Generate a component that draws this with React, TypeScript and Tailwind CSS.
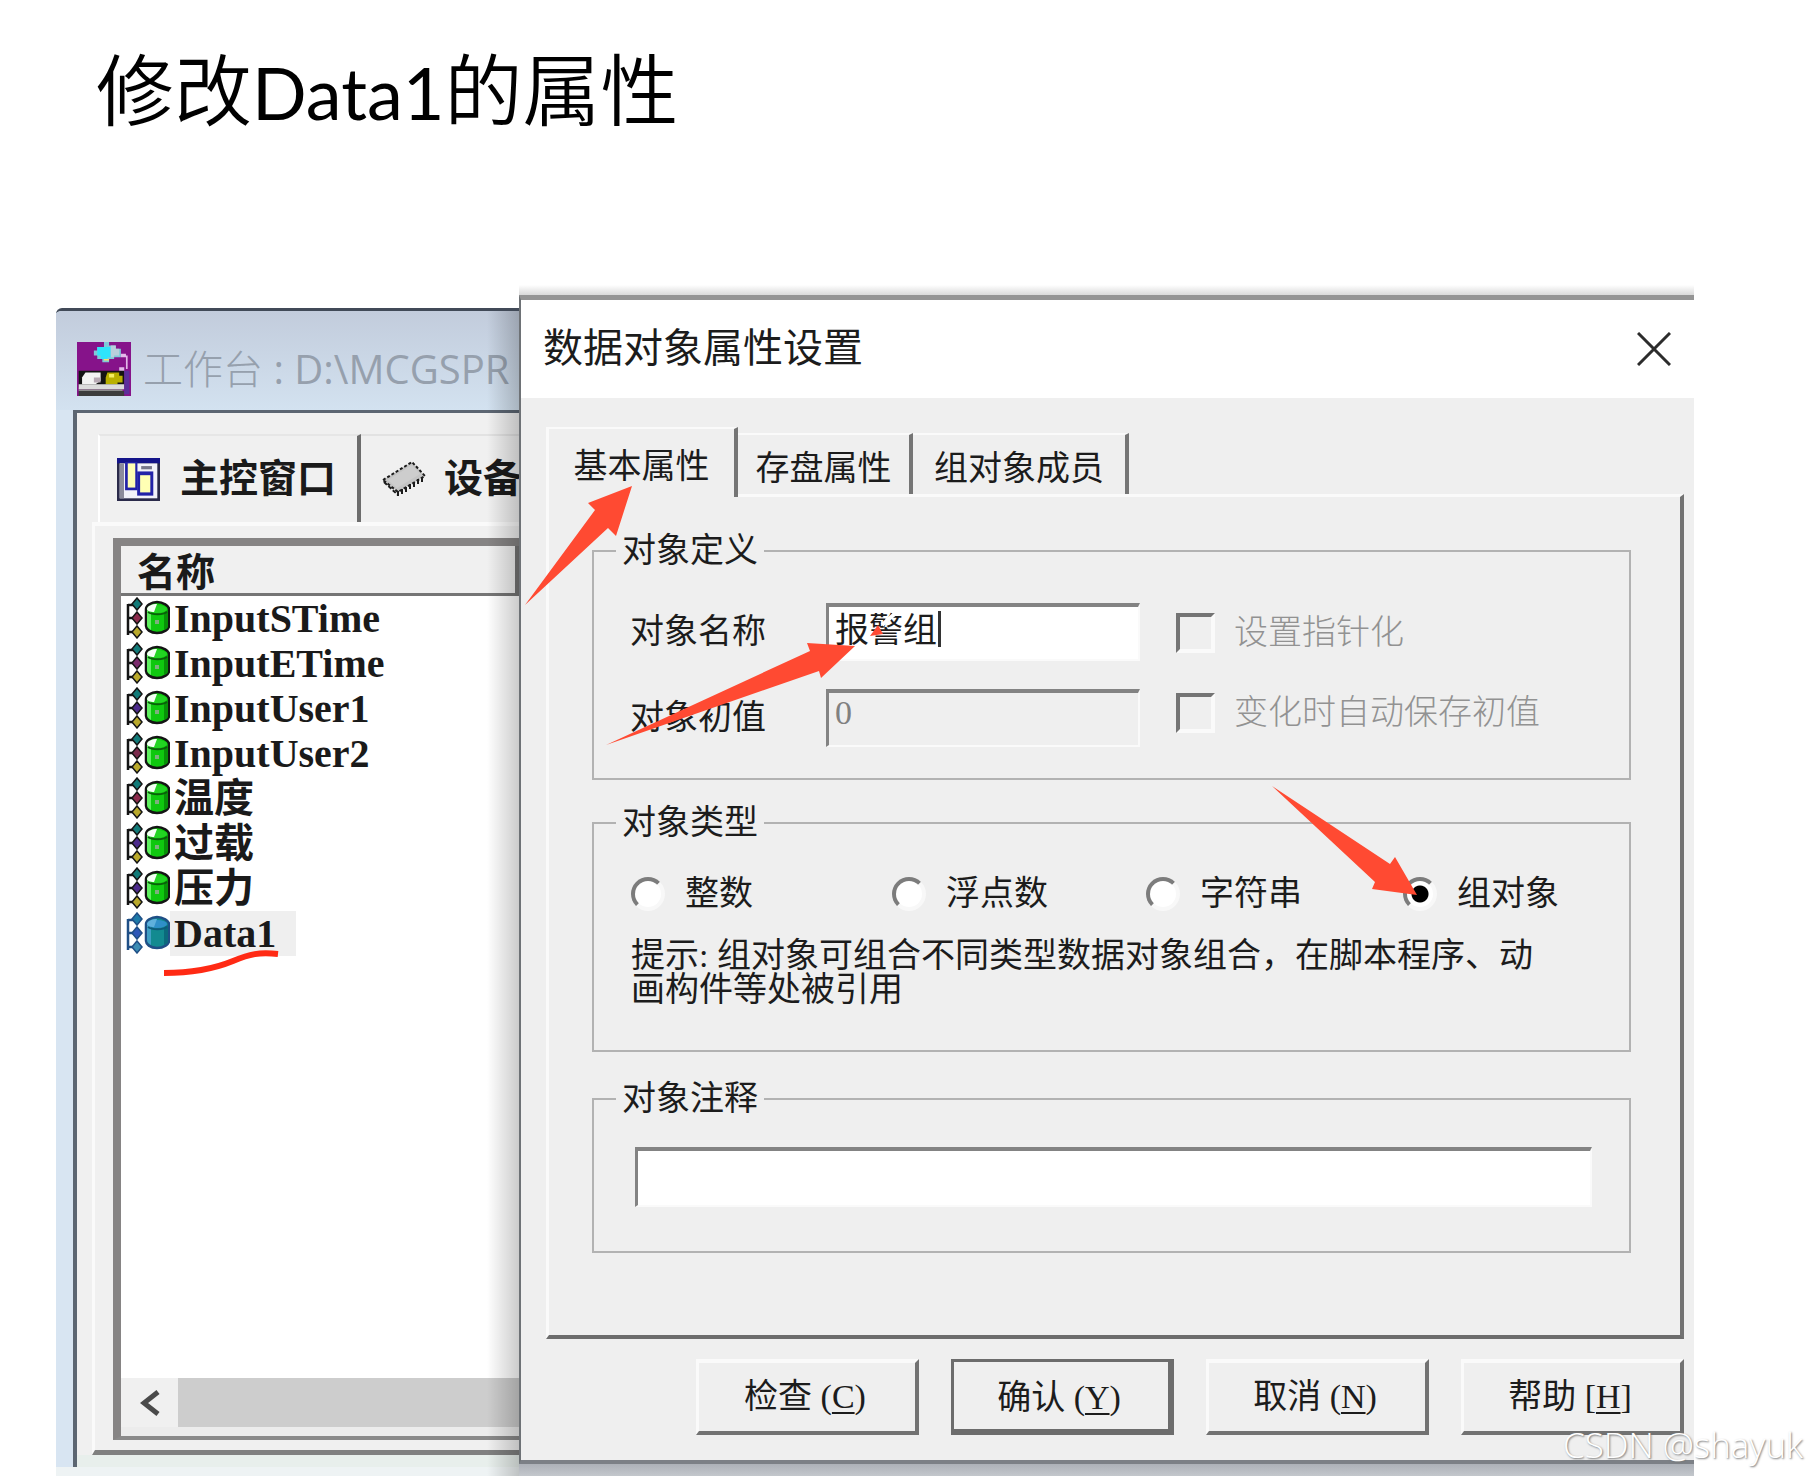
import React from "react";

const sans = "font-['Liberation_Serif','Noto_Sans_CJK_SC',sans-serif]";

function WorkbenchIcon() {
  return (
    <svg viewBox="0 0 32 32" className="h-[54px] w-[54px] shrink-0" aria-hidden="true">
      <rect width="32" height="32" fill="#86138a" />
      <path d="M16 0h3v2h4v2h3v5h-4v1h-3v2h-4v-2h-3V8h-2V5h2V3h4z" fill="#7fc9d8" />
      <path d="M12 3h8v6h-2v1h-4V8h-2z" fill="#2fe4fb" />
      <path d="M20 2h3v2h2v4h-3v1h-2z" fill="#b9cfdc" />
      <path d="M16 10h3v1h-3z" fill="#f4e06a" />
      <path d="M26 7h3v1h1v8h-1V9h-3zM25 15h3v3h-3z" fill="#e3b9ea" />
      <path d="M1 17h27v10H1z" fill="#141414" />
      <path d="M5 18h9v5l-3 2H3v-4z" fill="#f3f3f3" />
      <path d="M10 21h4v3h-4z" fill="#b7a9b4" />
      <path d="M18 18h7v2h2v4h-3v1h-7v-4z" fill="#b9b000" />
      <path d="M19 19h3v2h-3z" fill="#f4ef62" />
      <path d="M1 25h27v3H1z" fill="#dcdcdc" />
      <path d="M1 28h26v1H1z" fill="#8c8c8c" />
      <path d="M1 29h27v3H1z" fill="#3c3c3c" />
      <path d="M28 17h3v14h-3z" fill="#5c2f9b" />
    </svg>
  );
}

function LayoutIcon() {
  return (
    <svg viewBox="0 0 16 16" className="h-[43px] w-[43px] shrink-0" aria-hidden="true">
      <rect width="16" height="16" fill="#2a2a4a" />
      <rect width="16" height="2" fill="#14148a" />
      <rect x="1" y="2" width="14" height="13" fill="#f2f2fa" />
      <rect x="1" y="2" width="1.6" height="13" fill="#8c8c9c" />
      <rect x="3" y="1.500" width="4.600" height="10.500" fill="#2222a8" />
      <rect x="4" y="2" width="2.800" height="9" fill="#ffffb4" />
      <rect x="7.500" y="5" width="6" height="9" fill="#2222a8" />
      <rect x="8.600" y="6.400" width="3.800" height="6.400" fill="#ffffb4" />
      <rect x="9" y="3" width="4" height="1.200" fill="#77778c" />
    </svg>
  );
}

function ChipIcon() {
  return (
    <svg viewBox="0 0 45 38" className="h-[38px] w-[45px] shrink-0" aria-hidden="true">
      <path d="M2 20 31 2l13 14-27 16z" fill="#c4c4c4" stroke="#1c1c1c" strokeWidth="2" strokeDasharray="3 2" />
      <path d="M17 31v5M21 29v5M25 27v5M29 24v5M33 22v5M37 19v5M41 17v5" stroke="#1c1c1c" strokeWidth="2" />
      <path d="m3 22 14 13" stroke="#1c1c1c" strokeWidth="2" strokeDasharray="4 2" />
      <path d="M7 20 31 5l8 9-23 14z" fill="#cdcdcd" />
    </svg>
  );
}

function DataIcon({ selected, mid }: { selected?: boolean; mid: string }) {
  const line = selected ? "#1f4f86" : "#141414";
  return (
    <svg viewBox="0 0 45 42" className="h-[42px] w-[45px] shrink-0" aria-hidden="true">
      <path d="M3 7v31M3 8h8M3 21h7M3 35h7" stroke={line} strokeWidth="2.500" fill="none" />
      <path d="m12 1 5 6-5 6-5-6z" fill={selected ? "#1d7aa8" : "#127a78"} stroke={line} strokeWidth="1.500" />
      <path d="m12 15 5 6-5 6-5-6z" fill={selected ? "#2f58b8" : mid} stroke={line} strokeWidth="1.500" />
      <path d="m12 29 5 6-5 6-5-6z" fill={selected ? "#3c8cb4" : "#b9a92c"} stroke={line} strokeWidth="1.500" />
      <path
        d="M21 12c0-3 5-7 11-7s12 4 12 7v17c0 3-5 7-12 7s-11-4-11-7z"
        fill={selected ? "#128a90" : "#0fc80f"}
        stroke={line}
        strokeWidth="2.500"
      />
      <path d="M22 13v15c0 2 2 4 4 5V15z" fill={selected ? "#3f9fc4" : "#5ff05f"} />
      <path d="M39 15v18c3-1 4-2 4-4V13z" fill={selected ? "#0b6a7c" : "#089208"} />
      <ellipse cx="32" cy="12" rx="10" ry="4" fill={selected ? "#2f8fc8" : "#22d422"} />
      <path d="M22 12c0-3 5-5 10-5l-3 8c-4 0-7-1-7-3z" fill={selected ? "#5fb0dc" : "#f4fff4"} />
      <path d="M23 15c4 3 15 3 19 0" stroke={selected ? "#0f5a7a" : "#0a5f0a"} strokeWidth="2" fill="none" />
      {!selected && <path d="M30 23h4v4h-4z" fill="#7fae7f" />}
    </svg>
  );
}

const rows = [
  { name: "InputSTime", mid: "#8c2a4c" },
  { name: "InputETime", mid: "#7a2a6c" },
  { name: "InputUser1", mid: "#4c2a8c" },
  { name: "InputUser2", mid: "#7a2a4c" },
  { name: "温度", mid: "#8c2a4c" },
  { name: "过载", mid: "#4c2a8c" },
  { name: "压力", mid: "#4c2a8c" },
  { name: "Data1", mid: "#2f58b8", selected: true },
];

function Workbench() {
  return (
    <section className="relative mt-[23px] flex w-[463px] shrink-0 flex-col overflow-hidden rounded-tl-md border-t-3 border-[#414a58] bg-[#d8e5f2]">
      <header className="flex h-[99px] items-center gap-3 bg-linear-to-b from-[#c2ccdc] to-[#d3e2f0] pt-4 pl-[21px]">
        <WorkbenchIcon />
        <span className="font-['Open_Sans','Noto_Sans_CJK_SC',sans-serif] text-[40px] leading-[52px] whitespace-nowrap text-[#96a0ad]">
          <span className="font-light">工作台</span> : D:\MCGSPR
        </span>
      </header>
      <div className="ml-[17px] flex flex-1 flex-col border-t-3 border-l-4 border-[#5c6672] bg-[#f0f0f0] pt-[21px]">
        <div role="tablist" className="ml-[21px] flex h-[88px]">
          <button
            role="tab"
            className={`flex w-[263px] shrink-0 items-center gap-5 border-t-2 border-r-4 border-l-2 border-t-[#e6e6e6] border-r-[#6c6c6c] border-l-white pl-[17px] text-[39px] leading-[44px] font-bold ${sans}`}
          >
            <LayoutIcon />
            <span>主控窗口</span>
          </button>
          <button
            role="tab"
            className={`flex shrink-0 items-center gap-[18px] border-t-2 border-[#e2e2e2] pl-5 text-[39px] leading-[44px] font-bold ${sans}`}
          >
            <ChipIcon />
            <span>设备</span>
          </button>
        </div>
        <div className="ml-[15px] flex flex-1 flex-col border-t-4 border-b-5 border-l-3 border-t-[#fafafa] border-b-[#808080] border-l-[#fafafa] pt-3 pb-2.5 pl-[18px]">
          <div className="flex flex-1 flex-col border-t-8 border-b-4 border-l-8 border-[#868484] border-b-[#8a8a8a] bg-white">
            <table className="w-full border-collapse text-left">
              <thead>
                <tr>
                  <th
                    className={`h-12 border-r-4 border-b-3 border-[#757575] bg-[#f0f0f0] pt-1.5 pl-4 text-[39px] leading-[39px] font-bold ${sans}`}
                  >
                    名称
                  </th>
                </tr>
              </thead>
              <tbody>
                {rows.map((r) => (
                  <tr key={r.name}>
                    <td className="h-[45px] p-0 pl-1">
                      <div className="flex h-[45px] items-center">
                        <DataIcon selected={r.selected} mid={r.mid} />
                        <span
                          className={
                            r.selected
                              ? `bg-[#efefef] pr-5 pl-1 text-[40px] leading-[45px] font-bold text-[#1a1a1a] ${sans}`
                              : `pl-1 text-[40px] leading-[45px] font-bold text-[#1a1a1a] ${sans}`
                          }
                        >
                          {r.name}
                        </span>
                      </div>
                    </td>
                  </tr>
                ))}
              </tbody>
            </table>
            <svg viewBox="0 0 120 28" className="-mt-1.5 ml-10 h-7 w-[120px]" aria-hidden="true">
              <path d="M3 23C30 23 55 18 72 11S98 2 117 4" fill="none" stroke="#ff2a14" strokeWidth="6" />
            </svg>
            <div className="mt-auto flex h-[49px] bg-[#cdcdcd]">
              <button aria-label="向左滚动" className="flex w-[57px] items-center justify-center bg-[#f0f0f0]">
                <svg viewBox="0 0 20 26" className="h-[26px] w-5" aria-hidden="true">
                  <path d="M18 2 4 13l14 11" fill="none" stroke="#4a4a4a" strokeWidth="5" />
                </svg>
              </button>
            </div>
            <div className="h-[9px] bg-[#ececec]" />
          </div>
        </div>
        <div className="h-3 bg-[#e8efec]" />
      </div>
      <div className="h-[9px] bg-[#eef3f4]" />
      <div className="pointer-events-none absolute inset-y-0 right-0 w-8 bg-linear-to-r from-transparent to-black/20" />
    </section>
  );
}

const label = `text-[34px] leading-[34px] text-[#1c1c1c] ${sans}`;
const sunken =
  "border-t-4 border-r-2 border-b-2 border-l-3 border-t-[#838383] border-r-[#fafafa] border-b-[#fafafa] border-l-[#838383]";
const group = "block min-w-0 border-2 border-[#b2b2b2]";

function Check({ id, text }: { id: string; text: string }) {
  return (
    <div className="flex items-center gap-[19px]">
      <input
        id={id}
        type="checkbox"
        disabled
        className="h-10 w-[39px] shrink-0 appearance-none border-4 border-t-[#747474] border-r-[#fafafa] border-b-[#fafafa] border-l-[#747474] bg-[#efefef]"
      />
      <label htmlFor={id} className={`text-[34px] leading-[34px] font-light whitespace-nowrap text-[#929292] ${sans}`}>
        {text}
      </label>
    </div>
  );
}

function Radio({ id, text, checked }: { id: string; text: string; checked?: boolean }) {
  return (
    <div className="flex items-center gap-5">
      <input
        id={id}
        type="radio"
        name="kind"
        defaultChecked={checked}
        className="h-[34px] w-[34px] shrink-0 appearance-none rounded-full border-4 border-t-[#7c7c7c] border-r-[#f8f8f8] border-b-[#f8f8f8] border-l-[#7c7c7c] bg-white checked:bg-[radial-gradient(circle,#000_8px,#fff_9px)]"
      />
      <label htmlFor={id} className={`whitespace-nowrap ${label}`}>
        {text}
      </label>
    </div>
  );
}

function Action({ text, open, hotkey, close, primary }: { text: string; open: string; hotkey: string; close: string; primary?: boolean }) {
  return (
    <button
      className={
        primary
          ? `h-[76px] w-[223px] border-t-3 border-r-6 border-b-6 border-l-3 border-[#6c6c6c] pt-1 pr-1 ${label}`
          : `h-[76px] w-[223px] border-t-4 border-r-4 border-b-4 border-l-3 border-t-[#fafafa] border-r-[#727272] border-b-[#727272] border-l-[#fafafa] pr-1 ${label}`
      }
    >
      {text} {open}
      <span className="underline decoration-2 underline-offset-4">{hotkey}</span>
      {close}
    </button>
  );
}

function Annotations() {
  return (
    <svg viewBox="0 0 1175 1192" className="pointer-events-none absolute top-0 left-0 z-20 h-[1192px] w-[1175px]" aria-hidden="true">
      <g fill="#ff4a32">
        <path d="M6 320 76 225l-7-7 44-17-16 50-8-8z" />
        <path d="m87 460 204-94-3-8 48 3-34 32-2-7z" />
        <path d="m753 501 118 78 5-7 22 38-45-6 3-7z" />
        <path d="m351 351 8-11 5 9z" />
      </g>
      <path d="m379 326-16 14" stroke="#fff" strokeWidth="4" />
    </svg>
  );
}

function PropertiesDialog() {
  return (
    <section role="dialog" aria-label="数据对象属性设置" className="relative flex min-w-0 flex-1 flex-col">
      <div className="h-2.5 bg-linear-to-b from-white to-[#dadada]" />
      <div className="flex flex-col border-t-5 border-b-4 border-l-2 border-t-[#959595] border-b-[#7c8086] border-l-[#6e7276] bg-[#efefef]">
        <header className="flex h-[98px] items-center justify-between bg-white pr-[23px] pl-[22px]">
          <h2 className={`text-[40px] leading-[48px] text-[#1c1c1c] ${sans}`}>数据对象属性设置</h2>
          <button aria-label="关闭" className="h-[34px] w-[34px]">
            <svg viewBox="0 0 34 34" className="h-[34px] w-[34px]" aria-hidden="true">
              <path d="m1 1 32 32M33 1 1 33" stroke="#2c2c2c" strokeWidth="3" />
            </svg>
          </button>
        </header>

        <div className="pt-[29px] pr-2.5 pl-[25px]">
          <div role="tablist" className="flex h-[67px] items-end">
            <button
              role="tab"
              aria-selected="true"
              className={`relative z-10 -mb-[3px] h-[70px] w-48 border-t-2 border-r-4 border-l-3 border-t-[#fafafa] border-r-[#757575] border-l-[#fafafa] bg-[#efefef] pt-2 ${label}`}
            >
              基本属性
            </button>
            <button
              role="tab"
              aria-selected="false"
              className={`h-[61px] w-[175px] border-t-2 border-r-4 border-t-[#fafafa] border-r-[#757575] pt-2 ${label}`}
            >
              存盘属性
            </button>
            <button
              role="tab"
              aria-selected="false"
              className={`h-[61px] w-[216px] border-t-2 border-r-4 border-t-[#fafafa] border-r-[#757575] pt-2 ${label}`}
            >
              组对象成员
            </button>
          </div>

          <form className="flex flex-col border-t-3 border-r-4 border-b-4 border-l-3 border-t-[#fafafa] border-r-[#727272] border-b-[#6c6c6c] border-l-[#fafafa] pt-[37px] pr-[49px] pb-[82px] pl-[43px]">
            <fieldset className={group}>
              <legend className={`ml-[22px] px-1.5 ${label}`}>对象定义</legend>
              <div className="grid grid-cols-[196px_314px_1fr] gap-y-7 pt-[35px] pb-[31px] pl-9">
                <label htmlFor="name" className={`self-center ${label}`}>
                  对象名称
                </label>
                <div className="relative">
                  <input
                    id="name"
                    type="text"
                    defaultValue="报警组"
                    className={`h-[58px] w-full bg-white pb-3 pl-1.5 outline-none ${sunken} ${label}`}
                  />
                  <span className="absolute top-2 left-[112px] h-9 w-[3px] bg-[#333]" />
                </div>
                <div className="pt-2.5 pl-9">
                  <Check id="pointer" text="设置指针化" />
                </div>
                <label htmlFor="initial" className={`self-center ${label}`}>
                  对象初值
                </label>
                <input
                  id="initial"
                  type="text"
                  disabled
                  defaultValue="0"
                  className={`h-[58px] w-full bg-[#efefef] pb-3 pl-1.5 text-[34px] leading-[34px] text-[#808080] ${sans} ${sunken}`}
                />
                <div className="pt-1 pl-9">
                  <Check id="autosave" text="变化时自动保存初值" />
                </div>
              </div>
            </fieldset>

            <fieldset className={`mt-[26px] ${group}`}>
              <legend className={`ml-[22px] px-1.5 ${label}`}>对象类型</legend>
              <div className="pt-[37px] pb-[43px] pl-[37px]">
                <div className="grid grid-cols-[261px_254px_257px_auto]">
                  <Radio id="integer" text="整数" />
                  <Radio id="float" text="浮点数" />
                  <Radio id="string" text="字符串" />
                  <Radio id="group" text="组对象" checked />
                </div>
                <p className={`mt-7 ${label}`}>
                  提示: 组对象可组合不同类型数据对象组合，在脚本程序、动
                  <br />
                  画构件等处被引用
                </p>
              </div>
            </fieldset>

            <fieldset className={`mt-[30px] ${group}`}>
              <legend className={`ml-[22px] px-1.5 ${label}`}>对象注释</legend>
              <div className="pt-[31px] pr-[37px] pb-11 pl-[41px]">
                <input type="text" aria-label="对象注释" className={`block h-[60px] w-full bg-white px-2 ${sunken} ${label}`} />
              </div>
            </fieldset>
          </form>

          <footer className="flex justify-end gap-8 pt-5 pb-[25px]">
            <Action text="检查" open="(" hotkey="C" close=")" />
            <Action text="确认" open="(" hotkey="Y" close=")" primary />
            <Action text="取消" open="(" hotkey="N" close=")" />
            <Action text="帮助" open="[" hotkey="H" close="]" />
          </footer>
        </div>
      </div>
      <div className="h-3 bg-linear-to-b from-[#adb1b8] to-[#c3c7cc]" />
      <Annotations />
    </section>
  );
}

export default function App() {
  return (
    <main className="relative min-h-screen bg-white text-[#1a1a1a]">
      <h1 className="h-[285px] pt-11 pl-24 font-['Lato','Noto_Sans_CJK_SC',sans-serif] text-[78px] leading-[92px] font-normal text-black">
        <span className="font-[350]">修改</span>
        <span className="text-[72px]">Data1</span>
        <span className="font-[350]">的属性</span>
      </h1>
      <div className="flex pr-[113px] pl-14">
        <Workbench />
        <PropertiesDialog />
      </div>
      <p className="absolute right-1 bottom-3 font-['Open_Sans',sans-serif] text-[35px] leading-10 font-light text-white [text-shadow:1px_1px_2px_#777]">
        CSDN @shayuk
      </p>
    </main>
  );
}
